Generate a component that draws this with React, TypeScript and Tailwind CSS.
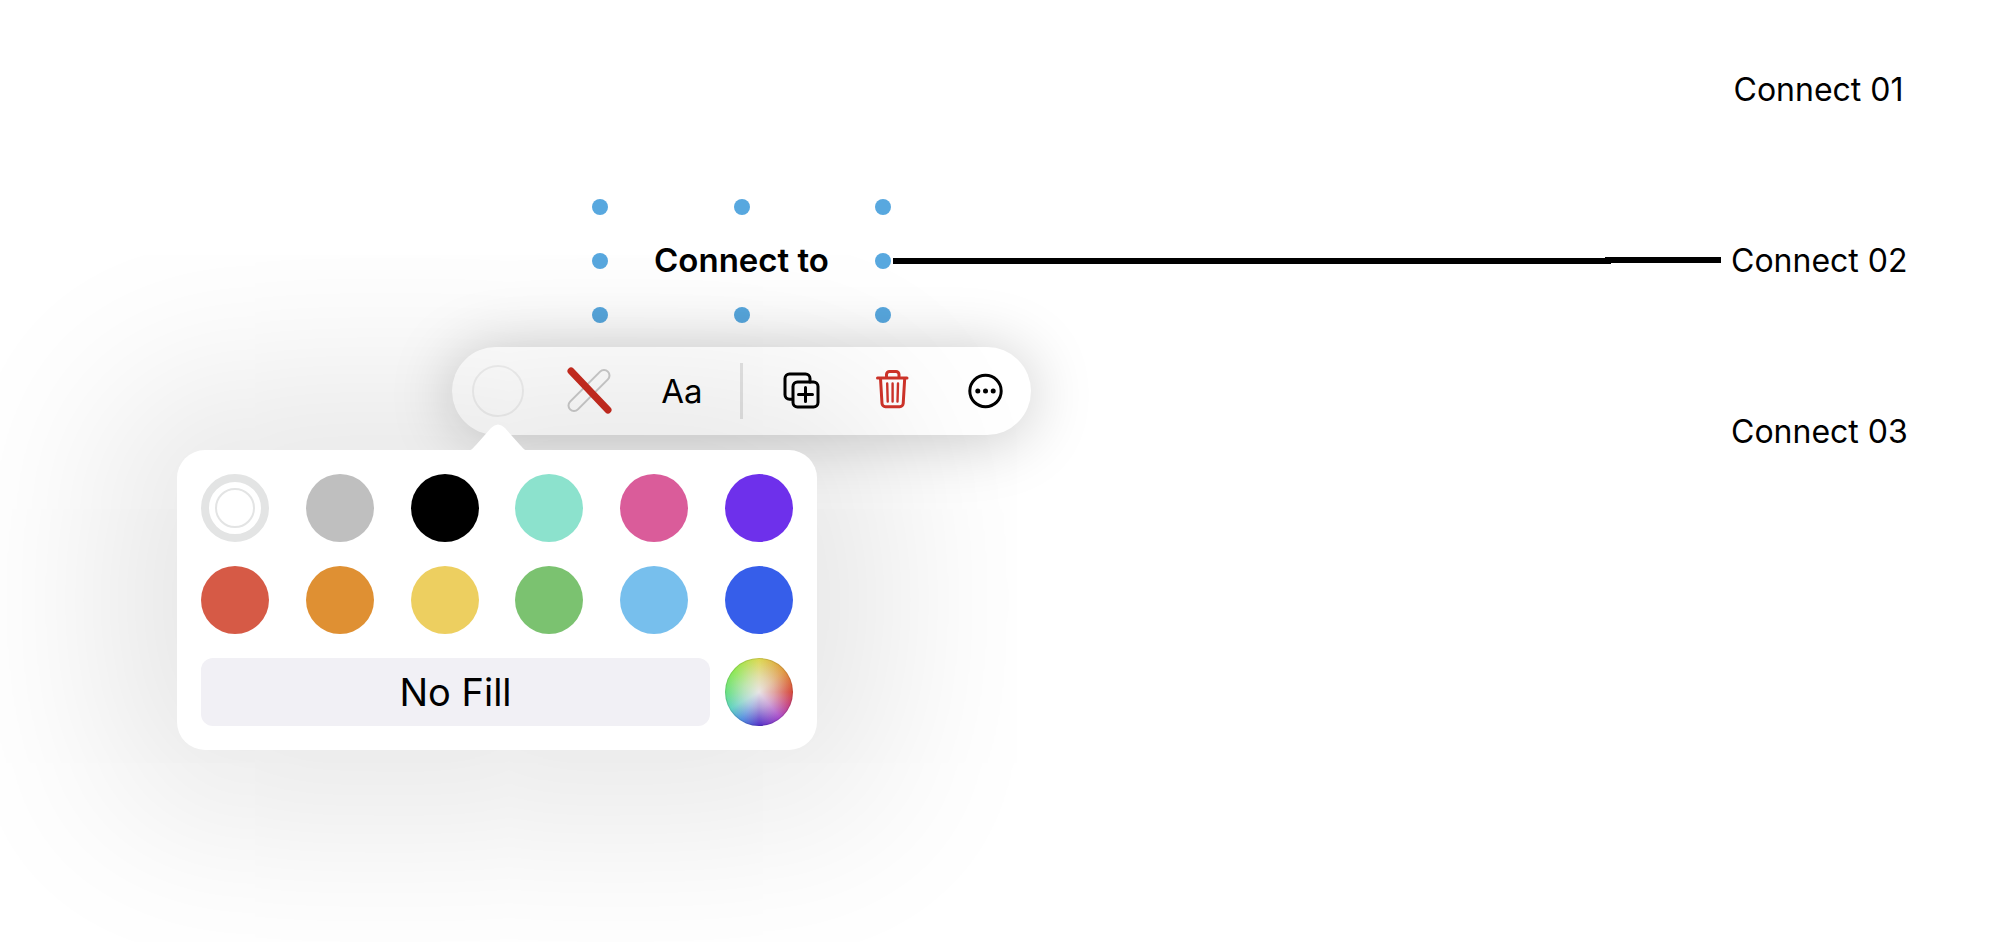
import { useState } from 'react';

interface Swatch {
  name: string;
  className: string;
}

const swatches: Swatch[] = [
  { name: 'White', className: 'bg-white' },
  { name: 'Gray', className: 'bg-[#bfbfbf]' },
  { name: 'Black', className: 'bg-black' },
  { name: 'Mint', className: 'bg-[#8ce2cd]' },
  { name: 'Pink', className: 'bg-[#da5c9a]' },
  { name: 'Purple', className: 'bg-[#6e30eb]' },
  { name: 'Red', className: 'bg-[#d65a46]' },
  { name: 'Orange', className: 'bg-[#df9033]' },
  { name: 'Yellow', className: 'bg-[#edcf60]' },
  { name: 'Green', className: 'bg-[#7bc270]' },
  { name: 'Sky', className: 'bg-[#77bfed]' },
  { name: 'Blue', className: 'bg-[#365eea]' },
];

const handles = [
  'left-0 top-0',
  'left-1/2 top-0 -translate-x-1/2',
  'right-0 top-0',
  'left-0 top-1/2 -translate-y-1/2',
  'right-0 top-1/2 -translate-y-1/2',
  'left-0 bottom-0',
  'left-1/2 bottom-0 -translate-x-1/2',
  'right-0 bottom-0',
];

const targets = ['Connect 01', 'Connect 02', 'Connect 03'];

function StrokeIcon() {
  return (
    <svg viewBox="0 0 52 52" className="size-[52px]" fill="none" strokeLinecap="round">
      <path d="M10 40.500L40 10.500" stroke="#cbcbcb" strokeWidth="13" />
      <path d="M10 40.500L40 10.500" stroke="#fff" strokeWidth="9" />
      <path d="M7 6L44 45" stroke="#c92c20" strokeWidth="7" />
    </svg>
  );
}

function DuplicateIcon() {
  return (
    <svg
      viewBox="0 0 52 52"
      className="size-[52px]"
      fill="none"
      stroke="#000"
      strokeWidth="3"
      strokeLinecap="round"
    >
      <path d="M17 34.200h-2.500a4.500 4.500 0 0 1-4.500-4.500V13.500A4.500 4.500 0 0 1 14.500 9h16a4.500 4.500 0 0 1 4.500 4.500V17" />
      <rect x="18" y="17" width="25" height="25" rx="4.500" />
      <path d="M30.500 22.600v14M23.500 29.600h14" />
    </svg>
  );
}

function TrashIcon() {
  return (
    <svg
      viewBox="0 0 52 52"
      className="size-[52px]"
      fill="none"
      stroke="#d0342a"
      strokeWidth="3"
      strokeLinecap="round"
      strokeLinejoin="round"
    >
      <path d="M10.500 13h29.500M19.500 12.500V9.500a3 3 0 0 1 3-3h6.500a3 3 0 0 1 3 3v3" />
      <path d="M13.500 13.500l1.500 25a3.400 3.400 0 0 0 3.400 3.200h14.400a3.400 3.400 0 0 0 3.400-3.200l1.500-25" />
      <path d="M20.200 18.500l.5 18M25.600 18.500v18M31 18.500l-.5 18" strokeWidth="2.400" />
    </svg>
  );
}

function MoreIcon() {
  return (
    <svg viewBox="0 0 52 52" className="size-[52px]">
      <circle cx="26.500" cy="26" r="15.700" fill="none" stroke="#000" strokeWidth="3" />
      <circle cx="18.800" cy="26" r="2.500" />
      <circle cx="26.500" cy="26" r="2.500" />
      <circle cx="34.200" cy="26" r="2.500" />
    </svg>
  );
}

function Toolbar() {
  return (
    <div
      role="toolbar"
      aria-label="Shape"
      className="absolute left-[452px] top-[347px] flex h-[88px] items-center rounded-full bg-white px-5 shadow-[0_4px_64px_rgba(0,0,0,0.22)]"
    >
      <div className="flex gap-10">
        <button aria-label="Fill" className="size-[52px] rounded-full border-2 border-black/6" />
        <button aria-label="Stroke">
          <StrokeIcon />
        </button>
        <button aria-label="Text style" className="w-[52px] text-[33px] leading-[52px]">
          Aa
        </button>
      </div>
      <div className="mx-8 h-14 w-[3px] bg-[#e4e4e4]" />
      <div className="flex gap-10">
        <button aria-label="Duplicate">
          <DuplicateIcon />
        </button>
        <button aria-label="Delete">
          <TrashIcon />
        </button>
        <button aria-label="More">
          <MoreIcon />
        </button>
      </div>
    </div>
  );
}

function FillPopover() {
  const [selected, setSelected] = useState('White');

  return (
    <div
      role="dialog"
      aria-label="Fill color"
      className="absolute left-[177px] top-[450px] flex w-[640px] flex-col gap-6 rounded-[28px] bg-white p-6 shadow-[0_0_180px_64px_rgba(0,0,0,0.105)]"
    >
      {/* Arrow */}
      <svg
        viewBox="0 0 64 28"
        className="absolute -top-[27px] left-[289px] h-7 w-16"
        fill="#fff"
      >
        <path d="M2 28C6 27 7 25 10 22L25 5Q32 -2 39 5L54 22C57 25 58 27 62 28Z" />
      </svg>

      <div className="grid grid-cols-[repeat(6,68px)] justify-between gap-y-6">
        {swatches.map(({ name, className }) => (
          <button
            key={name}
            aria-label={name}
            aria-pressed={selected === name}
            onClick={() => setSelected(name)}
            className={`flex size-[68px] items-center justify-center rounded-full ${className}`}
          >
            {selected === name && (
              <span className="flex size-[68px] items-center justify-center rounded-full border-8 border-[#e3e4e4]">
                <span className="size-10 rounded-full border-2 border-[#e3e4e4]" />
              </span>
            )}
          </button>
        ))}
      </div>

      <div className="flex gap-[15px]">
        <button
          onClick={() => setSelected('')}
          className="h-[68px] flex-1 rounded-xl bg-[#f1f0f5] text-[38px]"
        >
          No Fill
        </button>
        <button
          aria-label="Custom color"
          className="size-[68px] rounded-full border border-black/10 bg-[radial-gradient(circle,#e8e4e4_0%,rgba(232,228,228,0.6)_32%,rgba(232,228,228,0)_70%),conic-gradient(#dcd84e,#e0963c_50deg,#d64638_90deg,#c84078_112deg,#a848c8_140deg,#5030c8_180deg,#4c8ce0_212deg,#5cd2c0_240deg,#64e082_268deg,#8ce850_310deg,#dcd84e)] bg-origin-border"
        />
      </div>
    </div>
  );
}

export default function App() {
  return (
    <main className="relative min-h-screen overflow-hidden bg-white font-['Inter',sans-serif] text-black">
      {/* Diagram */}
      <div className="flex items-center pl-[592px] pr-[107px] pt-1">
        <div className="relative flex h-[124px] w-[299px] shrink-0 items-center justify-center text-[33px] font-semibold">
          Connect to
          {handles.map((position) => (
            <span key={position} className={`absolute size-4 rounded-full bg-[#58a8df] ${position}`} />
          ))}
        </div>
        <div className="ml-0.5 flex h-[7px] flex-1 items-start">
          <div className="mt-px h-1.5 flex-1 bg-black" />
          <div className="-ml-1.5 h-1.5 w-[116px] bg-black" />
        </div>
        <ul className="ml-2.5 w-[175px] text-center text-[32px] leading-[171px] whitespace-nowrap">
          {targets.map((target) => (
            <li key={target}>{target}</li>
          ))}
        </ul>
      </div>

      <Toolbar />
      <FillPopover />
    </main>
  );
}
